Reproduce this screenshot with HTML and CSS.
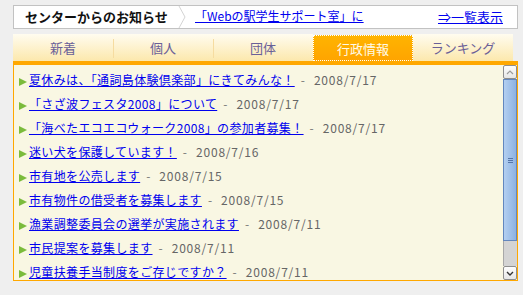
FILE: index.html
```html
<!DOCTYPE html>
<html lang="ja">
<head>
<meta charset="utf-8">
<link rel="stylesheet" href="styles.css">
</head>
<body>
<div class="page">
  <div class="notice">
    <div class="notice-title">センターからのお知らせ</div>
    <svg class="chev" width="9" height="22" viewBox="0 0 9 22"><polyline points="1,0 7,11 1,22" fill="none" stroke="#d4d4d4" stroke-width="1"/></svg>
    <div class="notice-msg"><a href="#">「Webの駅学生サポート室」について</a></div>
    <a class="notice-all" href="#">⇒一覧表示</a>
  </div>
  <ul class="tabs">
    <li class="tab">新着</li>
    <li class="tab">個人</li>
    <li class="tab">団体</li>
    <li class="tab active">行政情報</li>
    <li class="tab">ランキング</li>
  </ul>
  <div class="bar"></div>
  <div class="panel">
    <ul class="list">
      <li><span class="tri"></span><a href="#">夏休みは、「通詞島体験倶楽部」にきてみんな！</a><span class="dash">-</span><span class="date">2008/7/17</span></li>
      <li><span class="tri"></span><a href="#">「さざ波フェスタ2008」について</a><span class="dash">-</span><span class="date">2008/7/17</span></li>
      <li><span class="tri"></span><a href="#">「海べたエコエコウォーク2008」の参加者募集！</a><span class="dash">-</span><span class="date">2008/7/17</span></li>
      <li><span class="tri"></span><a href="#">迷い犬を保護しています！</a><span class="dash">-</span><span class="date">2008/7/16</span></li>
      <li><span class="tri"></span><a href="#">市有地を公売します</a><span class="dash">-</span><span class="date">2008/7/15</span></li>
      <li><span class="tri"></span><a href="#">市有物件の借受者を募集します</a><span class="dash">-</span><span class="date">2008/7/15</span></li>
      <li><span class="tri"></span><a href="#">漁業調整委員会の選挙が実施されます</a><span class="dash">-</span><span class="date">2008/7/11</span></li>
      <li><span class="tri"></span><a href="#">市民提案を募集します</a><span class="dash">-</span><span class="date">2008/7/11</span></li>
      <li><span class="tri"></span><a href="#">児童扶養手当制度をご存じですか？</a><span class="dash">-</span><span class="date">2008/7/11</span></li>
    </ul>
    <div class="scrollbar">
      <div class="sb-btn"><svg width="8" height="5" viewBox="0 0 8 5"><polyline points="1,4 4,1 7,4" fill="none" stroke="#9a9a9a" stroke-width="1.2"/></svg></div>
      <div class="sb-thumb"><span class="grip"></span></div>
      <div class="sb-track"></div>
      <div class="sb-btn"><svg width="8" height="5" viewBox="0 0 8 5"><polyline points="1,1 4,4 7,1" fill="none" stroke="#333" stroke-width="1.4"/></svg></div>
    </div>
  </div>
</div>
</body>
</html>
```
FILE: styles.css
```css
html, body {
  margin: 0;
  padding: 0;
  background: #efefef;
}
body {
  font-family: "Noto Sans CJK JP", "Noto Sans", sans-serif;
  font-size: 12px;
}
.page {
  width: 505px;
  padding: 5px 0 0 13px;
}
.notice {
  display: flex;
  height: 22px;
  border: 1px solid #c2c2c2;
  background: #fff;
  overflow: hidden;
}
.notice-title {
  font-weight: bold;
  font-size: 13px;
  line-height: 22px;
  padding-left: 11px;
  width: 151px;
  color: #111;
}
.chev {
  flex: none;
  margin-left: 2px;
}
.notice-msg {
  width: 174px;
  margin-left: 8px;
  padding-top: 1px;
  line-height: 17px;
  font-size: 12px;
}
.notice-msg a, .notice-all {
  color: #0000ee;
}
.notice-all {
  margin-left: auto;
  margin-right: 14px;
  line-height: 22px;
  font-size: 13px;
}
.tabs {
  list-style: none;
  margin: 5px 0 0;
  padding: 0;
  display: flex;
  width: 500px;
}
.tab {
  position: relative;
  width: 100px;
  height: 27px;
  display: flex;
  align-items: center;
  justify-content: center;
  font-size: 13px;
  color: #6a6098;
  background: linear-gradient(#fffcf0, #fce8ac);
}
.tab + .tab::before {
  content: "";
  position: absolute;
  left: 0;
  top: 5px;
  width: 1px;
  height: 19px;
  background: #f6dca0;
}
.tab.active {
  color: #fffbe8;
  background: linear-gradient(#ffb400, #ffa400);
  outline: 1px dotted #fff;
  outline-offset: -1px;
  height: 26px;
  margin-top: 1px;
}
.tab.active::before, .tab.active + .tab::before {
  display: none;
}
.bar {
  height: 4px;
  background: #ffa800;
}
.panel {
  display: flex;
  height: 215px;
  border: 1px solid #ffa800;
  border-top: 0;
  background: #f9f7e3;
}
.list {
  flex: 1;
  list-style: none;
  margin: 0;
  padding: 3px 0 0 5px;
  overflow: hidden;
  line-height: 24px;
  white-space: nowrap;
}
.list a {
  color: #0000ee;
  letter-spacing: 0.35px;
}
.tri {
  display: inline-block;
  width: 0;
  height: 0;
  border-left: 8px solid #7bbb3c;
  border-top: 4px solid transparent;
  border-bottom: 4px solid transparent;
  margin-right: 2px;
  vertical-align: -1px;
}
.dash {
  color: #777;
  margin-left: 6px;
}
.date {
  color: #666;
  margin-left: 9px;
  letter-spacing: 0.8px;
}
.scrollbar {
  width: 14px;
  margin-left: 1px;
  display: flex;
  flex-direction: column;
}
.sb-btn {
  height: 12px;
  border: 1px solid #8e8e8e;
  border-radius: 2px;
  background: linear-gradient(#fefefe, #e6e6e6);
  display: flex;
  align-items: center;
  justify-content: center;
}
.sb-thumb {
  height: 160px;
  border: 1px solid #6387be;
  background: linear-gradient(to right, #b4cff0, #8db2e2);
  display: flex;
  align-items: center;
  justify-content: center;
}
.grip {
  width: 5px;
  height: 5px;
  border-top: 1px solid #5574a8;
  border-bottom: 1px solid #5574a8;
  box-sizing: border-box;
  background: linear-gradient(#5574a8, #5574a8) center / 100% 1px no-repeat;
}
.sb-track {
  flex: 1;
  background: #d4d4d4;
  border-left: 1px solid #a8a8a8;
}
```
